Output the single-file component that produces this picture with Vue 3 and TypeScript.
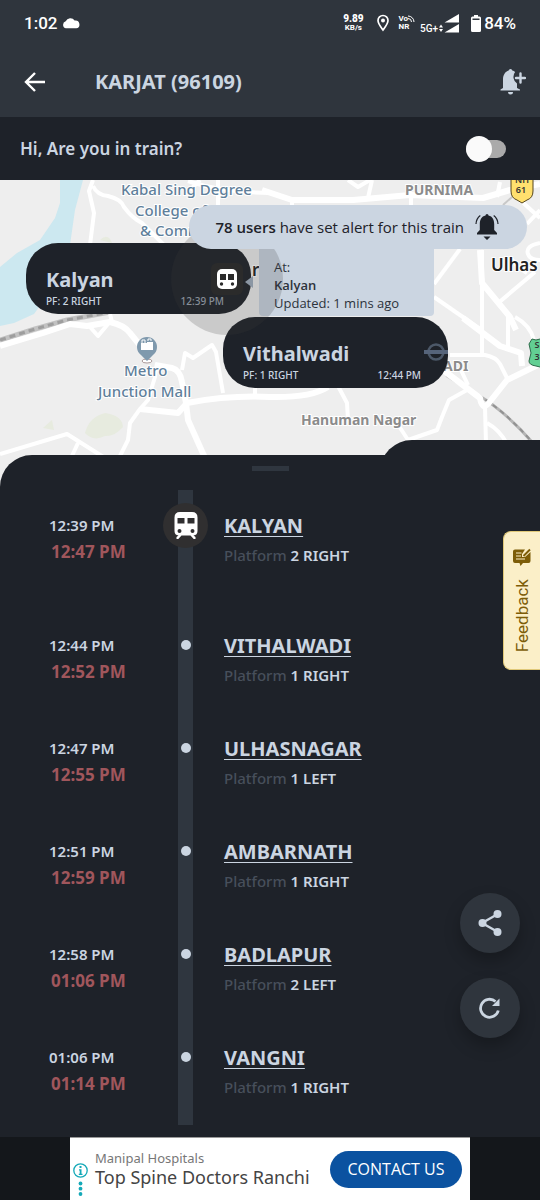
<script setup lang="ts">
import { ref } from 'vue'

interface Stop {
  name: string
  scheduled: string
  expected: string
  platform: string
}

const stops: Stop[] = [
  { name: 'KALYAN', scheduled: '12:39 PM', expected: '12:47 PM', platform: '2 RIGHT' },
  { name: 'VITHALWADI', scheduled: '12:44 PM', expected: '12:52 PM', platform: '1 RIGHT' },
  { name: 'ULHASNAGAR', scheduled: '12:47 PM', expected: '12:55 PM', platform: '1 LEFT' },
  { name: 'AMBARNATH', scheduled: '12:51 PM', expected: '12:59 PM', platform: '1 RIGHT' },
  { name: 'BADLAPUR', scheduled: '12:58 PM', expected: '01:06 PM', platform: '2 LEFT' },
  { name: 'VANGNI', scheduled: '01:06 PM', expected: '01:14 PM', platform: '1 RIGHT' },
]

const inTrain = ref(false)

const minorRoads: string[] = [
  'M90 327 L98 336 L108 324',
  'M110 314 L112 322',
  'M93 180 L89 191 L94 213 L90 245',
  'M93 186 Q97 195 108 196 Q121 199 124 207 Q132 218 142 223 L165 246',
  'M157 363 L155 377 L148 400 L140 409 L130 423 L128 440 L119 458',
  'M182 370 L185 353 L193 358 L212 345 L216 352 L223 393',
  'M0 454 L67 434 L105 458',
  'M78 443 L71 458',
  'M255 386 V397',
  'M338 386 L347 403 L348 420',
  'M397 423 L408 440 L437 430 L442 417 L449 400 L467 390',
  'M485 407 L486 444',
  'M487 423 Q500 430 507 444',
  'M482 250 L482 353',
  'M450 355 H485 Q496 357 500 364 L507 378',
  'M460 368 L468 385',
  'M508 317 V347',
  'M515 317 Q530 325 534 340',
  'M292 200 V208',
  'M372 180 L368 198',
  'M348 180 L358 187 L370 180',
  'M411 196 V208',
  'M500 182 L497 197',
  'M520 200 L540 218',
  'M527 224 L540 210',
  'M460 249 L434 284',
  'M434 297 L483 331',
  'M510 257 L518 267 L527 273',
  'M540 243 Q525 246 528 254 Q530 260 540 260',
  'M535 272 L497 304',
  'M200 180 L190 190',
  'M218 180 V206',
  'M188 181 Q220 192 270 193',
]

const mainRoads: string[] = [
  'M0 346 L43 333 L70 324 L87 326 L110 322 Q124 325 130 333 L147 354',
  'M155 365 L172 368 Q180 370 182 382 L186 403 L188 420 L205 458',
  'M140 409 L178 413 L187 403 Q230 395 270 397 Q310 398 328 387',
  'M443 370 L480 398 Q482 410 488 404 L507 380 L540 364',
  'M463 318 L500 346 L521 353 L522 366',
  'M480 250 L482 283 L510 317 L516 330',
  'M262 190 L292 200 L353 200 L410 195 L483 198 L510 190 L540 184',
]
</script>

<template>
  <div class="page">
    <header class="top">
      <div class="status">
        <span class="clock">1:02</span>
        <svg class="cloud" width="18" height="12" viewBox="0 0 18 12"><path fill="#fff" d="M4 11.300a3.600 3.600 0 0 1-.3-7A5 5 0 0 1 12.600 3.600a3.800 3.800 0 0 1 1.700 7.700z" /></svg>
        <span class="spacer"></span>
        <span class="speed"><b>9.89</b><small>KB/s</small></span>
        <svg class="loc" width="12" height="18" viewBox="0 0 12 18"><path fill="none" stroke="#fff" stroke-width="1.700" d="M6 16C3 12 1 9.500 1 6.500a5 5 0 0 1 10 0c0 3-2 5.500-5 9.500z" /><circle cx="6" cy="6.500" r="2" fill="#fff" /></svg>
        <span class="vonr">
          <span class="vo">Vo<svg width="7" height="7" viewBox="0 0 7 7"><path fill="none" stroke="#fff" d="M0 1a6 6 0 0 1 6 6M0 3.500A3.500 3.500 0 0 1 3.500 7" /></svg></span>
          <span>NR</span>
        </span>
        <span class="fiveg">5G+</span>
        <svg class="signal" width="20" height="19" viewBox="0 0 20 19"><path fill="#fff" d="M20 0v8.500H5.500zM20 10v8.500H5.500zM2 10.500l2 3H0zM2 18l2-3H0z" /></svg>
        <svg class="battery" width="10" height="17" viewBox="0 0 10 17"><path fill="#fff" fill-rule="evenodd" d="M3 0h4v1.500h1.500A1.500 1.500 0 0 1 10 3v12.500A1.500 1.500 0 0 1 8.500 17h-7A1.500 1.500 0 0 1 0 15.500V3a1.500 1.500 0 0 1 1.500-1.500H3zM1.500 3.500v1.500h7V3.500z" /></svg>
        <span class="percent">84%</span>
      </div>
      <div class="appbar">
        <button class="icon-btn" aria-label="Back">
          <svg width="24" height="24" viewBox="0 0 24 24"><path fill="none" stroke="#fff" stroke-width="2.400" d="M22 12H3.500M12 3L3 12l9 9" /></svg>
        </button>
        <h1>KARJAT (96109)</h1>
        <button class="icon-btn" aria-label="Add alert">
          <svg width="26" height="28" viewBox="0 0 26 28"><path fill="#cbd5e1" d="M10.500 1a1.800 1.800 0 0 1 1.800 1.600c1 .3 2 .8 2.800 1.500a8 8 0 0 0 1.900 11.500V20l3 1.500v1H.5v-1L3 20v-8.500c0-4.300 2.200-8 5.700-8.900A1.800 1.800 0 0 1 10.500 1zM8 24h5a2.500 2.500 0 0 1-5 0z" /><path stroke="#cbd5e1" stroke-width="2.400" stroke-linecap="round" d="M20.500 5.500v9M16 10h9" /></svg>
        </button>
      </div>
    </header>

    <label class="question">
      <span>Hi, Are you in train?</span>
      <input v-model="inTrain" type="checkbox" role="switch" />
    </label>

    <section class="map">
      <svg class="tiles" viewBox="0 180 540 308" preserveAspectRatio="xMidYMin slice">
        <rect y="180" width="540" height="308" fill="#eeeeee" />
        <path fill="#cce8f0" d="M60 180H83L75 210L70 245L50 292L34 314L14 323L0 326V267L17 253L40 240L55 218L60 203Z" />
        <path fill="#e7ebdf" d="M85 433q4-16 20-20q17 2 18 14q-9 10-18 9q-12 6-20-3zM43 428l9-8 2 10zM100 240q8-8 12 3z" />
        <g fill="none" stroke-linejoin="round">
          <path stroke="#c2c2c2" stroke-width="5" d="M0 340L35 329L67 320L110 312" />
          <path stroke="#9e9e9e" stroke-width="3" stroke-dasharray="6 4" d="M0 340L35 329L67 320L110 312" />
          <path stroke="#c8c8c8" stroke-width="2" d="M446 376L480 397M503 205L512 197" />
          <path stroke="#b5b5b5" stroke-width="3" d="M478 395Q505 411 532 442" />
          <path stroke="#929292" stroke-width="2" stroke-dasharray="5 4" d="M478 395Q505 411 532 442" />
          <path v-for="road in minorRoads" :key="road" :d="road" stroke="#fff" stroke-width="4" />
          <path v-for="road in mainRoads" :key="road" :d="road" stroke="#fff" stroke-width="6" />
        </g>
        <g class="poi">
          <text x="121" y="195">Kabal Sing Degree</text>
          <text x="135" y="216">College of</text>
          <text x="140" y="236">&amp; Comm</text>
          <text x="124" y="376">Metro</text>
          <text x="98" y="397">Junction Mall</text>
        </g>
        <g class="area">
          <text x="405" y="195">PURNIMA</text>
          <text x="301" y="425">Hanuman Nagar</text>
          <text x="443" y="371">ADI</text>
        </g>
        <text class="city" x="491" y="271">Ulhas</text>
        <text class="city" x="252" y="276">r</text>
        <path fill="#ffe06e" stroke="#55451c" d="M511 176h22v15q0 7-6 9l-5 3l-5-3q-6-2-6-9z" />
        <text class="shield" x="522" y="183">NH</text>
        <text class="shield" x="521" y="193">61</text>
        <path fill="#62cf93" stroke="#2c6b49" d="M532 339l4 1 8-2v30l-8-2q-7-1-7-5l2-8-2-9z" />
        <text class="shield" x="537" y="348">S</text>
        <text class="shield" x="537" y="360">3</text>
        <ellipse cx="147" cy="361" rx="5" ry="2" fill="#fff" stroke="#a99" />
        <path fill="#7f99ad" d="M147 361l-6-6a10 10 0 1 1 12 0z" />
        <path fill="#fff" d="M141 343h6v-1h6v8h-12z" />
        <path fill="none" stroke="#fff" d="M142 343v-3h3v3M148 341v-2h3v2" />
      </svg>

      <article class="pin pin-kalyan">
        <h2>Kalyan</h2>
        <p><span>PF: 2 RIGHT</span><span class="dim">12:39 PM</span></p>
      </article>

      <aside class="callout">
        <p>At:</p>
        <p class="strong">Kalyan</p>
        <p>Updated: 1 mins ago</p>
      </aside>

      <article class="pin pin-vithalwadi">
        <h2>Vithalwadi</h2>
        <p><span>PF: 1 RIGHT</span><span>12:44 PM</span></p>
        <svg class="roundel" width="24" height="18" viewBox="0 0 24 18"><circle cx="12" cy="9" r="7.500" fill="none" stroke="#4c5868" stroke-width="2.500" /><path fill="#56647a" d="M0 7h24v4H0z" /></svg>
      </article>

      <div class="pulse">
        <svg class="beak" width="8" height="12" viewBox="0 0 8 12"><path fill="#8b96a3" d="M8 0v12L0 6z" /></svg>
        <div class="train-tile">
          <svg width="20" height="20" viewBox="0 0 20 20"><rect width="20" height="20" rx="5" fill="#fff" /><path fill="#2b2b2b" d="M3 5h6v6H3zM11 5h6v6h-6z" /><circle cx="4.500" cy="15" r="1.700" fill="#2b2b2b" /><circle cx="15.500" cy="15" r="1.700" fill="#2b2b2b" /></svg>
        </div>
      </div>

      <div class="alert-pill">
        <span><b>78 users</b> have set alert for this train</span>
        <svg width="24" height="26" viewBox="0 0 24 26"><path fill="#1e2229" d="M12 0a1.500 1.500 0 0 1 1.500 1.500c4 .8 5.700 4.300 5.700 8.500v6l2.800 3v1.500H2V19l2.800-3v-6c0-4.200 1.700-7.700 5.700-8.500A1.500 1.500 0 0 1 12 0zM8.500 22.500h7L12 26z" /><path fill="none" stroke="#1e2229" stroke-width="1.200" d="M5.300 1.500Q1.300 4.500 1 10M18.700 1.500Q22.700 4.500 23 10" /></svg>
      </div>
      <div class="hump"></div>
    </section>

    <main class="sheet">
      <div class="handle"></div>
      <ol class="stops">
        <li v-for="(stop, i) in stops" :key="stop.name" :class="{ current: i === 0 }">
          <div class="times">
            <time class="scheduled">{{ stop.scheduled }}</time>
            <time class="expected">{{ stop.expected }}</time>
          </div>
          <div class="track">
            <span v-if="i === 0" class="train">
              <svg width="24" height="27" viewBox="0 0 24 27"><path fill="#fff" fill-rule="evenodd" d="M6 0h12q5.500 0 5.500 5.500V19q0 4-4 4.500l2 1.500v2h-1.800L16.500 23.500h-9L4.300 27H2.500v-2l2-1.500q-4-.5-4-4.500V5.500Q.5 0 6 0zM3.500 6v5.500h7V6zM13.500 6v5.500h7V6zM5.500 17a2 2 0 1 0 .01 4 2 2 0 0 0-.01-4zM18.500 17a2 2 0 1 0 .01 4 2 2 0 0 0-.01-4z" /></svg>
            </span>
            <span v-else class="dot"></span>
          </div>
          <div class="info">
            <a href="#">{{ stop.name }}</a>
            <p>Platform <b>{{ stop.platform }}</b></p>
          </div>
        </li>
      </ol>
    </main>

    <footer class="ad-bar">
      <div class="ad">
        <div class="ad-marks">
          <svg width="15" height="34" viewBox="0 0 15 34"><circle cx="7.500" cy="7.500" r="6.700" fill="none" stroke="#14a9b8" stroke-width="1.300" /><path fill="#14a9b8" d="M6.500 3h2v2h-2zM6 6.300h2.500v4.400h1V12H5.800v-1.300h.9V7.500H6z" /><circle cx="7.500" cy="20.500" r="1.900" fill="#14a9b8" /><circle cx="7.500" cy="25.700" r="1.900" fill="#14a9b8" /><circle cx="7.500" cy="31" r="1.900" fill="#14a9b8" /></svg>
        </div>
        <div class="ad-text">
          <p class="brand">Manipal Hospitals</p>
          <p class="headline">Top Spine Doctors Ranchi</p>
        </div>
        <button class="cta">CONTACT US</button>
      </div>
    </footer>

    <button class="feedback">
      <span>Feedback</span>
      <svg width="18" height="18" viewBox="0 0 18 18"><path fill="#7d5d08" d="M2 1.500h10L9 6v3h3l5.500-5V13q0 2-2 2H10l-2.500 3-1-3H2q-2 0-2-2V3.500q0-2 2-2z" /><path stroke="#fbefc8" stroke-width="1.200" d="M3 5h5.500M3 8h5M3 11h9" /><path stroke="#7d5d08" stroke-width="2" d="M10.500 8L17 1.500" /></svg>
    </button>

    <div class="fabs">
      <button aria-label="Share">
        <svg width="26" height="28" viewBox="0 0 26 28"><path fill="none" stroke="#cbd5e1" stroke-width="2.400" d="M20 5.500L5 14l15 8.500" /><g fill="#cbd5e1"><circle cx="20.500" cy="5" r="4" /><circle cx="5.500" cy="14" r="4" /><circle cx="20.500" cy="23" r="4" /></g></svg>
      </button>
      <button aria-label="Refresh">
        <svg width="22" height="22" viewBox="0 0 22 22"><path fill="none" stroke="#cbd5e1" stroke-width="2.800" d="M19.300 13.500A9 9 0 1 1 16.500 4.500" /><path fill="#cbd5e1" d="M20.500 1.500V9H13z" /></svg>
      </button>
    </div>
  </div>
</template>

<style>
body {
  background: #1e2229;
}
</style>

<style scoped>
.page {
  position: relative;
  display: flex;
  flex-direction: column;
  min-height: 100vh;
  overflow: hidden;
  background: #1e2229;
  color: #cbd5e1;
  font-family: 'Noto Sans', 'Open Sans', sans-serif;
}
h1, h2, p, ol { margin: 0; padding: 0; }
button {
  border: 0;
  padding: 0;
  background: none;
  font-family: inherit;
  cursor: pointer;
}
svg { display: block; flex: none; }

.top { background: #2f353d; }
.status {
  display: flex;
  align-items: center;
  height: 46px;
  padding: 0 24px;
  color: #fff;
  font-family: Roboto, sans-serif;
}
.clock { font-size: 17px; font-weight: 500; }
.cloud { margin-left: 5px; }
.spacer { flex: 1; }
.speed {
  display: flex;
  flex-direction: column;
  align-items: center;
  font-size: 10px;
  line-height: 10px;
  font-weight: 700;
}
.speed small { font-size: 8px; line-height: 8px; }
.loc { margin-left: 13px; }
.vonr {
  margin-left: 10px;
  font-size: 8px;
  line-height: 8px;
  font-weight: 700;
  display: flex;
  flex-direction: column;
}
.vo { display: flex; }
.fiveg { align-self: flex-end; margin: 0 1px 11px 5px; font-size: 10px; line-height: 12px; font-weight: 500; }
.battery { margin-left: 12px; }
.percent { margin-left: 3px; font-size: 17px; font-weight: 500; }

.appbar {
  display: flex;
  align-items: center;
  height: 71px;
  padding: 0 14px 0 23px;
}
.appbar h1 {
  flex: 1;
  margin-left: 48px;
  font-size: 20px;
  line-height: 28px;
  font-weight: 700;
}

.question {
  display: flex;
  align-items: center;
  justify-content: space-between;
  height: 63px;
  padding: 0 34px 0 20px;
  font-size: 17px;
  font-weight: 600;
}
.question input {
  appearance: none;
  width: 40px;
  height: 18px;
  margin: 0;
  border-radius: 9px;
  background: #aaa;
  display: flex;
  align-items: center;
}
.question input::before {
  content: '';
  width: 26px;
  height: 26px;
  border-radius: 50%;
  background: #fafafa;
  flex: none;
}
.question input:checked { background: #8fb4d8; justify-content: flex-end; }

.map {
  position: relative;
  height: 308px;
  background: #eee;
  overflow: hidden;
}
.tiles { width: 100%; height: 100%; }
.poi text {
  font-size: 15px;
  font-weight: 500;
  fill: #5f7f9b;
  stroke: #fff;
  stroke-width: 2px;
  paint-order: stroke;
}
.area text {
  font-size: 14px;
  font-weight: 700;
  fill: #8b8b8b;
  stroke: #fff;
  stroke-width: 2px;
  paint-order: stroke;
}
.city { font-size: 17px; font-weight: 600; fill: #222; stroke: #fff; stroke-width: 2px; paint-order: stroke; }
.shield { font-size: 9px; font-weight: 600; fill: #333; text-anchor: middle; }

.pin {
  position: absolute;
  box-sizing: border-box;
  width: 225px;
  height: 71px;
  padding: 22px 27px 0 20px;
  border-radius: 32px;
  background: #1e2229;
}
.pin h2 { font-size: 20px; line-height: 30px; font-weight: 700; }
.pin p {
  display: flex;
  justify-content: space-between;
  font-size: 10px;
  line-height: 12px;
  font-weight: 500;
}
.pin .dim { color: #9aa3ae; }
.pin-kalyan { left: 26px; top: 63px; }
.pin-vithalwadi { left: 223px; top: 137px; }
.roundel { position: absolute; right: 0; top: 26px; }

.callout {
  position: absolute;
  left: 259px;
  top: 56px;
  box-sizing: border-box;
  width: 175px;
  height: 80px;
  padding: 22px 15px 0;
  border-radius: 4px;
  background: #cbd5e1;
  color: #2d333c;
  font-family: 'Open Sans', 'Noto Sans', sans-serif;
  font-size: 13px;
  line-height: 18px;
}
.callout .strong { font-weight: 600; }

.pulse {
  position: absolute;
  left: 171px;
  top: 43px;
  width: 112px;
  height: 112px;
  border-radius: 50%;
  background: rgba(60, 60, 60, 0.2);
  display: flex;
  align-items: center;
  justify-content: center;
}
.beak { position: absolute; right: 30px; top: 53px; }
.train-tile {
  display: flex;
  align-items: center;
  justify-content: center;
  width: 32px;
  height: 32px;
  border-radius: 6px;
  background: #2b2b2b;
}

.alert-pill {
  position: absolute;
  right: 13px;
  top: 25px;
  display: flex;
  align-items: center;
  gap: 11px;
  box-sizing: border-box;
  height: 44px;
  padding: 0 28px 0 26px;
  border-radius: 22px;
  background: #cbd5e1;
  color: #1e2229;
  font-family: 'Open Sans', 'Noto Sans', sans-serif;
  font-size: 15px;
}
.alert-pill b { font-weight: 600; }
.hump {
  position: absolute;
  left: 380px;
  right: 0;
  bottom: 0;
  height: 48px;
  border-radius: 32px 0 0 0;
  background: #1e2229;
}

.sheet {
  position: relative;
  flex: 1;
  margin-top: -33px;
  border-radius: 32px 0 0 0;
  background: #1e2229;
}
.handle {
  width: 37px;
  height: 5px;
  margin: 11px auto 19px;
  background: #2f363f;
}
.stops { list-style: none; }
.stops li {
  display: grid;
  grid-template-columns: 178px 15px 1fr;
  min-height: 103px;
}
.stops li.current { min-height: 120px; }
.times {
  display: flex;
  flex-direction: column;
  padding: 22px 0 0 49px;
}
.scheduled { font-size: 15px; line-height: 26px; font-weight: 600; }
.expected { margin-left: 2px; font-size: 17px; line-height: 28px; font-weight: 700; color: #a0565c; }
.track {
  display: flex;
  justify-content: center;
  align-items: flex-start;
  background: #2f363f;
}
.dot {
  flex: none;
  width: 10px;
  height: 10px;
  margin-top: 30px;
  border-radius: 50%;
  background: #cbd5e1;
}
.train {
  flex: none;
  display: flex;
  align-items: center;
  justify-content: center;
  width: 45px;
  height: 45px;
  margin-top: 13px;
  border-radius: 50%;
  background: #302f30;
}
.info { padding: 22px 0 0 31px; }
.info a {
  display: block;
  font-size: 20px;
  line-height: 28px;
  font-weight: 700;
  color: #cbd5e1;
  text-decoration: underline;
  text-decoration-thickness: 1px;
  text-underline-offset: 3px;
  width: max-content;
}
.info p { margin-top: 4px; font-size: 15px; line-height: 22px; font-weight: 500; color: #474f5b; }
.info b { font-weight: 600; color: #cbd5e1; }

.ad-bar {
  display: flex;
  justify-content: center;
  height: 63px;
  background: #14171b;
}
.ad {
  display: flex;
  box-sizing: border-box;
  width: 400px;
  padding: 0 8px 0 3px;
  border-top: 1px solid #999;
  background: #fff;
}
.ad-marks { padding-top: 25px; }
.ad-text { flex: 1; padding: 11px 0 0 7px; white-space: nowrap; }
.brand { font-size: 13px; line-height: 18px; color: #777; }
.headline { font-size: 18px; line-height: 20px; color: #444; }
.cta {
  align-self: center;
  width: 132px;
  height: 37px;
  border-radius: 19px;
  background: #0b52a0;
  color: #fff;
  font-family: 'Open Sans', 'Noto Sans', sans-serif;
  font-size: 16px;
}

.feedback {
  position: absolute;
  right: 0;
  top: 531px;
  display: flex;
  flex-direction: column-reverse;
  align-items: center;
  justify-content: center;
  gap: 13px;
  box-sizing: border-box;
  width: 37px;
  height: 139px;
  border: 1px solid #e0c878;
  border-right: 0;
  border-radius: 8px 0 0 8px;
  background: #fbefc8;
  color: #7d5d08;
  font-family: Roboto, sans-serif;
  font-size: 17px;
}
.feedback span { writing-mode: vertical-rl; transform: rotate(180deg); }

.fabs {
  position: absolute;
  right: 20px;
  bottom: 162px;
  display: flex;
  flex-direction: column;
  gap: 25px;
}
.fabs button {
  display: flex;
  align-items: center;
  justify-content: center;
  width: 60px;
  height: 60px;
  border-radius: 50%;
  background: #2f353d;
  box-shadow: 0 8px 16px rgba(0, 0, 0, 0.25);
}
</style>
